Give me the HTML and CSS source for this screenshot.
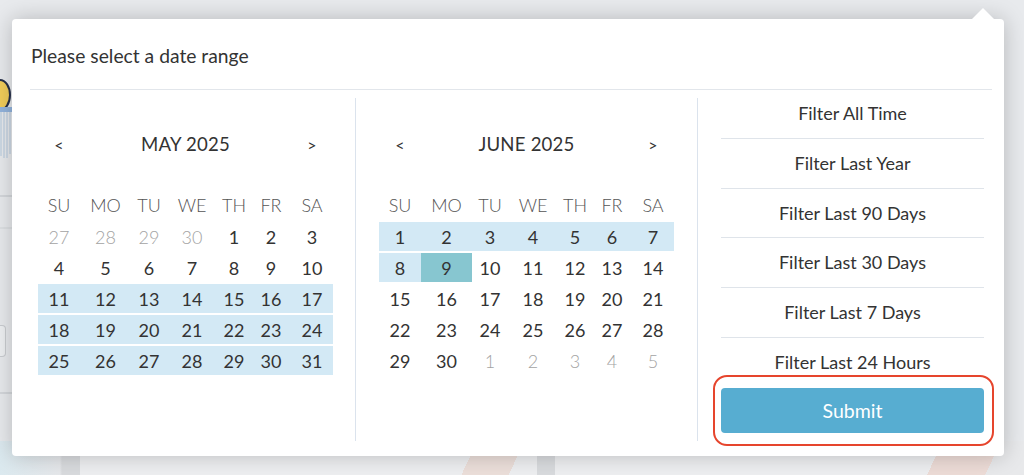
FILE: index.html
```html
<!DOCTYPE html>
<html lang="en">
<head>
<meta charset="utf-8">
<title>Date range</title>
<link rel="stylesheet" href="styles.css">
</head>
<body>
<div class="page">
  <div class="page-main">
    <div class="side">
      <svg class="side-art" width="14" height="82" viewBox="0 0 14 82">
        <ellipse cx="0" cy="17" rx="10" ry="15" fill="#f2cd5a" stroke="#27304a" stroke-width="2"/>
        <rect x="0" y="29" width="14" height="5" fill="#93b4dd"/>
        <path d="M1 34 V78 M4 34 V80 M7 34 V80 M10 34 V76" stroke="#bccde0" stroke-width="1.2"/>
      </svg>
      <div class="side-rule"></div>
      <div class="side-rule light"></div>
      <div class="side-input"></div>
      <div class="side-rule"></div>
    </div>
  </div>
  <div class="page-cards">
    <div class="card card-a"></div>
    <div class="card card-b"></div>
  </div>
</div>

<div class="popover">
  <div class="popover-title">Please select a date range</div>
  <div class="popover-body">
    <div class="cal cal-may">
      <div class="cal-nav"><span class="nav-btn">&lt;</span><span class="nav-title">MAY 2025</span><span class="nav-btn">&gt;</span></div>
      <div class="cal-grid">
        <span class="wd">SU</span><span class="wd">MO</span><span class="wd">TU</span><span class="wd">WE</span><span class="wd">TH</span><span class="wd">FR</span><span class="wd">SA</span>
        <span class="d off">27</span><span class="d off">28</span><span class="d off">29</span><span class="d off">30</span><span class="d">1</span><span class="d">2</span><span class="d">3</span>
        <span class="d">4</span><span class="d">5</span><span class="d">6</span><span class="d">7</span><span class="d">8</span><span class="d">9</span><span class="d">10</span>
        <span class="d in">11</span><span class="d in">12</span><span class="d in">13</span><span class="d in">14</span><span class="d in">15</span><span class="d in">16</span><span class="d in">17</span>
        <span class="d in">18</span><span class="d in">19</span><span class="d in">20</span><span class="d in">21</span><span class="d in">22</span><span class="d in">23</span><span class="d in">24</span>
        <span class="d in">25</span><span class="d in">26</span><span class="d in">27</span><span class="d in">28</span><span class="d in">29</span><span class="d in">30</span><span class="d in">31</span>
      </div>
    </div>
    <div class="cal cal-june">
      <div class="cal-nav"><span class="nav-btn">&lt;</span><span class="nav-title">JUNE 2025</span><span class="nav-btn">&gt;</span></div>
      <div class="cal-grid">
        <span class="wd">SU</span><span class="wd">MO</span><span class="wd">TU</span><span class="wd">WE</span><span class="wd">TH</span><span class="wd">FR</span><span class="wd">SA</span>
        <span class="d in">1</span><span class="d in">2</span><span class="d in">3</span><span class="d in">4</span><span class="d in">5</span><span class="d in">6</span><span class="d in">7</span>
        <span class="d in">8</span><span class="d sel">9</span><span class="d">10</span><span class="d">11</span><span class="d">12</span><span class="d">13</span><span class="d">14</span>
        <span class="d">15</span><span class="d">16</span><span class="d">17</span><span class="d">18</span><span class="d">19</span><span class="d">20</span><span class="d">21</span>
        <span class="d">22</span><span class="d">23</span><span class="d">24</span><span class="d">25</span><span class="d">26</span><span class="d">27</span><span class="d">28</span>
        <span class="d">29</span><span class="d">30</span><span class="d off">1</span><span class="d off">2</span><span class="d off">3</span><span class="d off">4</span><span class="d off">5</span>
      </div>
    </div>
    <div class="ranges">
      <div class="range">Filter All Time</div>
      <div class="range">Filter Last Year</div>
      <div class="range">Filter Last 90 Days</div>
      <div class="range">Filter Last 30 Days</div>
      <div class="range">Filter Last 7 Days</div>
      <div class="range range-last">Filter Last 24 Hours</div>
      <button class="submit" type="button">Submit</button>
    </div>
  </div>
  <div class="annot"></div>
</div>
</body>
</html>
```
FILE: styles.css
```css
* { box-sizing: border-box; }
html, body { margin: 0; padding: 0; }
body {
  width: 1024px;
  height: 475px;
  overflow: hidden;
  position: relative;
  font-family: Lato, "Open Sans", "Liberation Sans", sans-serif;
  color: #333;
  background: #e8eaed;
}

/* dimmed page behind the popover */
.page {
  height: 475px;
  display: flex;
  flex-direction: column;
}
.page-main { flex: 1; }
.side { width: 12px; padding-top: 60px; }
.side-art { display: block; margin-top: 18px; }
.side-rule { height: 2px; background: #d4d7db; margin-top: 35px; }
.side-rule.light { background: #dde0e3; margin-top: 30px; }
.side-input {
  height: 32px;
  margin-top: 96px;
  border: 1px solid #c9ccd0;
  border-left: none;
  border-radius: 0 4px 4px 0;
  width: 6px;
  background: #eef0f2;
}
.page-cards {
  height: 34px;
  display: flex;
  gap: 18px;
  padding-left: 80px;
  background: linear-gradient(90deg, #dbe9ef 0, #e6e8eb 60px, #d9dbde 62px, #d9dbde 80px);
}
.card { height: 100%; }
.card-a {
  width: 457px;
  background: linear-gradient(115deg, #eeeff1 0 84%, #ecdfda 84% 94%, #eeeff1 94%);
}
.card-b {
  flex: 1;
  background: linear-gradient(115deg, #eeeff1 0 80%, #eddcd7 80% 92%, #e8e9eb 92%);
}

/* popover */
.popover {
  position: absolute;
  left: 12px;
  top: 19px;
  width: 992px;
  height: 437px;
  background: #fff;
  border-radius: 4px;
  box-shadow: 0 0 22px rgba(0, 0, 0, 0.22);
  padding: 0 12px 0 18px;
}
.popover::before {
  content: "";
  position: absolute;
  top: -11px;
  left: 960px;
  border-left: 11.5px solid transparent;
  border-right: 11.5px solid transparent;
  border-bottom: 11px solid #fff;
}
.popover-title {
  height: 71px;
  padding: 26px 0 0 1px;
  font-size: 19.3px;
  line-height: 22px;
  color: #333;
  border-bottom: 1px solid #e2e6eb;
}
.popover-body { display: flex; }

.cal {
  margin-top: 8px;
  height: 343px;
  padding-top: 30px;
  border-right: 1px solid #dbe3ed;
}
.cal-may { width: 326px; padding-left: 8px; }
.cal-june { width: 342px; padding-left: 23px; }

.cal-nav {
  display: grid;
  grid-template-columns: 42px 211px 42px;
  height: 32px;
  align-items: center;
  text-align: center;
  margin-bottom: 29px;
}
.nav-btn { font-size: 16px; color: #333; }
.nav-title { font-size: 18.6px; color: #333; letter-spacing: 0.2px; }

.cal-grid {
  display: grid;
  width: 295px;
  grid-template-columns: 42px 51px 36px 50px 34px 40px 42px;
  grid-template-rows: 31px;
  grid-auto-rows: 29px;
  row-gap: 2px;
}
.wd, .d {
  display: flex;
  align-items: center;
  justify-content: center;
  font-size: 18px;
}
.wd { font-weight: 300; color: #555; }
.d { color: #333; }
.d.off { color: #a3a3a3; font-weight: 300; }
.d.in { background: #d3e9f5; }
.d.sel { background: #87c6d0; }

/* preset ranges */
.ranges {
  width: 294px;
  margin-top: -1px;
  padding: 0 8px 0 23px;
}
.range {
  height: 49.75px;
  line-height: 48.75px;
  text-align: center;
  font-size: 18px;
  color: #333;
  border-bottom: 1px solid #dfe4ea;
}
.range-last { height: 48.75px; border-bottom: none; }
.submit {
  display: block;
  width: 100%;
  height: 45px;
  margin-top: 1.5px;
  border: none;
  border-radius: 4px;
  background: #57add1;
  color: #fff;
  font-family: Lato, "Open Sans", "Liberation Sans", sans-serif;
  font-size: 19.5px;
}

/* red highlight annotation drawn over the button */
.annot {
  position: absolute;
  left: 700.5px;
  top: 356px;
  width: 281.5px;
  height: 71px;
  border: 2.5px solid #e6452d;
  border-radius: 14px;
}
```
